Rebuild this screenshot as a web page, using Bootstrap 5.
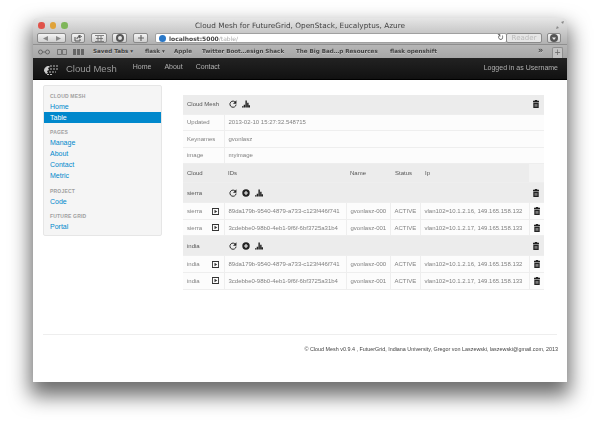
<!DOCTYPE html>
<html lang="en">
<head>
<meta charset="utf-8">
<title>Cloud Mesh</title>
<link href="https://cdn.jsdelivr.net/npm/bootstrap@5.3.0/dist/css/bootstrap.min.css" rel="stylesheet">
<style>
html,body{height:425px;overflow:hidden;background:#fff}
body{padding:18px 33px 0;font-family:"Liberation Sans",Arial,sans-serif}
.mac-win{height:364px;background:#fff;border-radius:3px 3px 0 0;box-shadow:0 11px 20px 3px rgba(0,0,0,.58);overflow:hidden;display:flex;flex-direction:column}
.soft{filter:blur(.4px)}
.mac-title{height:14px;background:linear-gradient(#e6e6e6,#c9c9c9);position:relative;font:7.3px/15px "DejaVu Sans",sans-serif;color:#444;text-align:center;flex:none}
.light{width:6.5px;height:6.500px;border-radius:50%;display:block;flex:none}
.lights{position:absolute;left:5px;top:4px;gap:5px}
.l-r{background:#e0534a}.l-y{background:#e0a33a}.l-g{background:#7fb65a}
.resize{position:absolute;right:3px;top:3px}
.mac-tools{height:13px;background:linear-gradient(#c9c9c9,#b1b1b1);padding-left:4px;padding-right:6px;flex:none;border-bottom:1px solid #8f8f8f}
.tb{height:10px;border:1px solid #8a8a8a;border-radius:2px;background:linear-gradient(#f4f4f4,#cfcfcf);color:#666;display:flex;align-items:center;justify-content:center;flex:none}
.w-a{width:29px;margin-right:5px}.w-b{width:14px;margin-right:6px}.w-c{width:16px;margin-right:5px}.w-d{width:15px;margin-right:6px}.w-e{width:15px;margin-right:7px}
.url{width:352px;height:10px;background:#fff;border:1px solid #a0a0a0;border-radius:2px;font:bold 6px/9px "DejaVu Sans",sans-serif;color:#444;padding-left:3px;flex:none;gap:3px}
.url span.u-rest{color:#aaa;font-weight:400;margin-left:-3px}
.globe{width:7px;height:7px;border-radius:50%;background:#2a78c8;flex:none}
.reload{margin-left:auto;margin-right:2px;font:8px/8px "DejaVu Sans",sans-serif;color:#555;font-weight:400}
.reader{width:36px;font:7px/8px "DejaVu Sans",sans-serif;color:#bbb;margin-left:-1px;margin-right:5px;background:#e6e6e6}
.w-f{width:14px}
.mac-book{height:13px;background:linear-gradient(#b6b6b6,#a6a6a6);font:bold 5.6px/13px "DejaVu Sans",sans-serif;color:#444;position:relative;flex:none;white-space:nowrap;text-shadow:0 .5px 0 rgba(255,255,255,.35)}
.bk-ic{position:absolute;top:3.500px;color:#555}
.i-1{left:5px}.i-2{left:24px}.i-3{left:40px}
.bm{position:absolute;top:0}
.b1{left:60px}.b2{left:112px}.b3{left:141px}.b4{left:169px}.b5{left:263px}.b6{left:357px}
.more{position:absolute;left:505px;top:-1px;font-size:8px}
.addtab{position:absolute;left:519px;top:2px;width:11px;height:11px;background:#c4c4c4;border:1px solid #8f8f8f;border-bottom:0;border-radius:2px 2px 0 0;text-align:center;font:8px/9px "DejaVu Sans",sans-serif;color:#666;text-shadow:none}
.mesh-nav.navbar{height:22px;padding:0 9px 0 10px;background:linear-gradient(#222,#111);flex:none;flex-wrap:nowrap;border-bottom:1px solid #000;align-items:flex-start}
.mesh-logo{margin-top:6px;margin-right:5px;flex:none}
.mesh-brand.navbar-brand{font-size:9.5px;line-height:11px;margin:4.500px 16px 0 0;padding:0;color:#999}
.mesh-links{gap:13px;flex-direction:row;margin-top:4px}
.mesh-links .nav-link{font-size:7px;line-height:9px;padding:0;color:#b0b0b0}
.mesh-user{font-size:7px;line-height:9px;color:#b0b0b0;margin:5px 0 0 auto}
.sidebox{width:119px;height:151px;margin:5px 0 0 10px;background:#f5f5f5;border:1px solid #e6e6e6;border-radius:2px;padding:4.500px 0;flex:none}
.sidebox .nav-link{font-size:7px;line-height:11px;height:11px;padding:0 0 0 6px;color:#08c}
.sidebox .nav-link.active-item{color:#fff;background:#0088cc;margin-top:0}
.side-h{font-size:5px;line-height:10px;height:10px;font-weight:700;letter-spacing:.2px;color:#a0a0a0;text-transform:uppercase;padding-left:6px}
.g1{margin-top:4px}.g2{margin-top:5px}
.tbl-wrap{width:361px;margin:15px 0 0 21px;flex:none}
.mesh-t.table{table-layout:fixed;width:361px;margin:0;border-collapse:collapse;font-size:6px;line-height:8px;color:#777;border-bottom:1px solid #ccc}
.mesh-t.table>tbody>tr>*{padding:0 0 0 4px;height:16.600px;vertical-align:middle;background:#fcfcfc;box-shadow:none;border:0;border-bottom:1px solid #eee;border-left:1px solid #eee;color:#808080;font-weight:400;white-space:nowrap;overflow:hidden}
.mesh-t.table>tbody>tr>*:first-child{border-left:0}
.mesh-t.table>tbody>tr.hd>*{background:#ececec;border-left:0;height:19px;color:#555}
.mesh-t.table>tbody>tr.sec>*{height:20px}
.mesh-t.table>tbody>tr.hd>th{font-weight:400}
.mesh-t.table>tbody>tr.hd>.ln{padding-left:5px}
.mesh-t.table>tbody>tr.hd>.blank{background:#f3f3f3}
.ics{gap:5px;color:#333}
.c1{width:41px}.c2{width:122px}.c3{width:44px}.c4{width:30px}.c5{width:109px}.c6{width:15px}
.first-in{justify-content:space-between;padding-right:5px}
.foot-rule{margin:auto 10px 0;height:1px;background:#eee;flex:none}
.foot-t{font-size:5.400px;line-height:8px;color:#444;text-align:right;padding:10px 9px 30px 0;flex:none}
.main-row{height:250px;flex:none}
.foot-wrap{flex:1;display:flex;flex-direction:column;margin-top:4px}
</style>
</head>
<body>
<svg width="0" height="0" class="position-absolute">
  <defs>
    <symbol id="i-ref" viewBox="0 0 14 14"><path d="M11.600 4.400A5.400 5.400 0 1 0 12.400 8" fill="none" stroke="#222" stroke-width="1.700"/><path d="M13 0.500V6.500H7z" fill="#222"/></symbol>
    <symbol id="i-plus" viewBox="0 0 14 14"><path fill-rule="evenodd" fill="#222" d="M7 .5a6.500 6.500 0 1 1 0 13a6.500 6.500 0 1 1 0-13zM6 3.500V6H3.500V8H6v2.500H8V8h2.500V6H8V3.500z"/></symbol>
    <symbol id="i-sig" viewBox="0 0 14 14"><path fill="#222" d="M0 11h2.500v2H0zM3 8.500h2.500V13H3zM6 1h2.500v12H6zM9 5h2.500v8H9zM11.700 9H14v4h-2.300z"/></symbol>
    <symbol id="i-tr" viewBox="2 0 10 14" preserveAspectRatio="none"><path fill="#222" fill-rule="evenodd" d="M5 0h4v1.500h3V4H2V1.500h3zM2.500 5h9v9h-9zM5 7v5h1V7zM8 7v5h1V7z"/></symbol>
    <symbol id="i-play" viewBox="0 0 14 14"><path fill="#333" fill-rule="evenodd" d="M0 0h14v14H0zM1.800 1.800v10.400h10.400V1.800zM5 3.500l5.500 3.500L5 10.500z"/></symbol>
  </defs>
</svg>
<div class="mac-win">
  <div class="mac-title soft">
    <div class="lights d-flex"><span class="light l-r"></span><span class="light l-y"></span><span class="light l-g"></span></div>
    Cloud Mesh for FutureGrid, OpenStack, Eucalyptus, Azure
    <svg class="resize" width="8" height="8" viewBox="0 0 8 8"><path d="M0 8l3-1-2-2zM8 0L5 1l2 2z" fill="#888"/></svg>
  </div>
  <div class="mac-tools d-flex align-items-center soft">
    <div class="tb w-a gap-2"><svg width="5" height="5" viewBox="0 0 5 5"><path d="M5 0v5L0 2.500z" fill="#888"/></svg><svg width="5" height="5" viewBox="0 0 5 5"><path d="M0 0v5l5-2.500z" fill="#888"/></svg></div>
    <div class="tb w-b"><svg width="8" height="7" viewBox="0 0 8 7"><path d="M1 2v4h5V4M3 4c0-2 1-2.500 3-2.500M5 0l2.500 1.500L5 3z" fill="none" stroke="#555"/></svg></div>
    <div class="tb w-c"><svg width="9" height="7" viewBox="0 0 9 7"><path d="M0 .5h9M1 3.500h7M0 6.500h9M3 1v5M6 1v5" stroke="#666" stroke-width=".8"/></svg></div>
    <div class="tb w-d"><svg width="8" height="8" viewBox="0 0 8 8"><circle cx="4" cy="4" r="3" fill="none" stroke="#555" stroke-width="2"/></svg></div>
    <div class="tb w-e"><svg width="6" height="6" viewBox="0 0 6 6"><path d="M3 0v6M0 3h6" stroke="#666" stroke-width="1.200"/></svg></div>
    <div class="url d-flex align-items-center"><span class="globe"></span><span>localhost:5000</span><span class="u-rest">/table/</span><span class="reload">&#8635;</span></div>
    <div class="tb reader">Reader</div>
    <div class="tb w-f"><svg width="8" height="8" viewBox="0 0 8 8"><circle cx="4" cy="4" r="4" fill="#555"/><path d="M2 3.500h4L4 6z" fill="#eee"/></svg></div>
  </div>
  <div class="mac-book soft">
    <svg class="bk-ic i-1" width="12" height="6" viewBox="0 0 12 6"><circle cx="2.500" cy="3" r="2" fill="none" stroke="#666"/><circle cx="9.500" cy="3" r="2" fill="none" stroke="#666"/><path d="M4.500 3h3" stroke="#666"/></svg>
    <svg class="bk-ic i-2" width="10" height="6" viewBox="0 0 10 6"><path d="M.5.500h4v5h-4zM5.500.500h4v5h-4z" fill="none" stroke="#666" stroke-width=".8"/></svg>
    <svg class="bk-ic i-3" width="11" height="6" viewBox="0 0 11 6"><path d="M0 0h3v6H0zM4 0h3v6H4zM8 0h3v6H8z" fill="#666"/></svg>
    <span class="bm b1">Saved Tabs &#9662;</span><span class="bm b2">flask &#9662;</span><span class="bm b3">Apple</span><span class="bm b4">Twitter Boot…esign Shack</span><span class="bm b5">The Big Bad…p Resources</span><span class="bm b6">flask openshift</span>
    <span class="more">&#187;</span><span class="addtab">+</span>
  </div>
  <nav class="navbar mesh-nav soft">
    <svg class="mesh-logo" width="18" height="12" viewBox="0 0 18 12"><path d="M1 7c0-3 2-5 5-5l1 1-2 1 1 2-2 1 1 2-2 1z" fill="#ccc"/><path d="M7 2h9M7 5h8M6 8h7M4 10.500h6" stroke="#bbb" stroke-width="1.200" stroke-dasharray="2 1"/></svg>
    <a class="navbar-brand mesh-brand" href="#">Cloud Mesh</a>
    <ul class="nav mesh-links">
      <li class="nav-item"><a class="nav-link" href="#">Home</a></li>
      <li class="nav-item"><a class="nav-link" href="#">About</a></li>
      <li class="nav-item"><a class="nav-link" href="#">Contact</a></li>
    </ul>
    <span class="mesh-user">Logged in as Username</span>
  </nav>
  <div class="d-flex main-row soft">
    <div class="sidebox">
      <div class="side-h">Cloud Mesh</div>
      <ul class="nav flex-column">
        <li><a class="nav-link" href="#">Home</a></li>
        <li><a class="nav-link active-item" href="#">Table</a></li>
      </ul>
      <div class="side-h g1">Pages</div>
      <ul class="nav flex-column">
        <li><a class="nav-link" href="#">Manage</a></li>
        <li><a class="nav-link" href="#">About</a></li>
        <li><a class="nav-link" href="#">Contact</a></li>
        <li><a class="nav-link" href="#">Metric</a></li>
      </ul>
      <div class="side-h g2">Project</div>
      <ul class="nav flex-column"><li><a class="nav-link" href="#">Code</a></li></ul>
      <div class="side-h g1">Future Grid</div>
      <ul class="nav flex-column"><li><a class="nav-link" href="#">Portal</a></li></ul>
    </div>
    <div class="tbl-wrap">
      <table class="table mesh-t">
        <colgroup><col class="c1"><col class="c2"><col class="c3"><col class="c4"><col class="c5"><col class="c6"></colgroup>
        <tbody>
          <tr class="hd"><th>Cloud Mesh</th><td colspan="4" class="ln"><div class="d-flex ics"><svg width="8" height="8"><use href="#i-ref"/></svg><svg width="8" height="8"><use href="#i-sig"/></svg></div></td><td><svg width="6" height="8"><use href="#i-tr"/></svg></td></tr>
          <tr><td>Updated</td><td colspan="5">2013-02-10 15:27:32.548715</td></tr>
          <tr><td>Keynames</td><td colspan="5">gvonlasz</td></tr>
          <tr><td>image</td><td colspan="5">myimage</td></tr>
          <tr class="hd"><th>Cloud</th><th>IDs</th><th>Name</th><th class="ln">Status</th><th class="ln">Ip</th><th class="blank"></th></tr>
          <tr class="hd sec"><td>sierra</td><td colspan="4" class="ln"><div class="d-flex ics"><svg width="8" height="8"><use href="#i-ref"/></svg><svg width="8" height="8"><use href="#i-plus"/></svg><svg width="8" height="8"><use href="#i-sig"/></svg></div></td><td><svg width="6" height="8"><use href="#i-tr"/></svg></td></tr>
          <tr><td><div class="d-flex first-in align-items-center">sierra<svg width="7" height="7"><use href="#i-play"/></svg></div></td><td>89da179b-9540-4879-a733-c123f446f741</td><td>gvonlasz-000</td><td>ACTIVE</td><td>vlan102=10.1.2.16, 149.165.158.132</td><td><svg width="6" height="8"><use href="#i-tr"/></svg></td></tr>
          <tr><td><div class="d-flex first-in align-items-center">sierra<svg width="7" height="7"><use href="#i-play"/></svg></div></td><td>3cdebbe0-98b0-4eb1-9f6f-6bf3725a31b4</td><td>gvonlasz-001</td><td>ACTIVE</td><td>vlan102=10.1.2.17, 149.165.158.133</td><td><svg width="6" height="8"><use href="#i-tr"/></svg></td></tr>
          <tr class="hd sec"><td>india</td><td colspan="4" class="ln"><div class="d-flex ics"><svg width="8" height="8"><use href="#i-ref"/></svg><svg width="8" height="8"><use href="#i-plus"/></svg><svg width="8" height="8"><use href="#i-sig"/></svg></div></td><td><svg width="6" height="8"><use href="#i-tr"/></svg></td></tr>
          <tr><td><div class="d-flex first-in align-items-center">india<svg width="7" height="7"><use href="#i-play"/></svg></div></td><td>89da179b-9540-4879-a733-c123f446f741</td><td>gvonlasz-000</td><td>ACTIVE</td><td>vlan102=10.1.2.16, 149.165.158.132</td><td><svg width="6" height="8"><use href="#i-tr"/></svg></td></tr>
          <tr><td><div class="d-flex first-in align-items-center">india<svg width="7" height="7"><use href="#i-play"/></svg></div></td><td>3cdebbe0-98b0-4eb1-9f6f-6bf3725a31b4</td><td>gvonlasz-001</td><td>ACTIVE</td><td>vlan102=10.1.2.17, 149.165.158.133</td><td><svg width="6" height="8"><use href="#i-tr"/></svg></td></tr>
        </tbody>
      </table>
    </div>
  </div>
  <div class="foot-wrap soft">
    <div class="foot-rule"></div>
    <div class="foot-t">© Cloud Mesh v0.9.4 , FutuerGrid, Indiana University, Gregor von Laszewski, laszewski@gmail.com, 2013</div>
  </div>
</div>
</body>
</html>
